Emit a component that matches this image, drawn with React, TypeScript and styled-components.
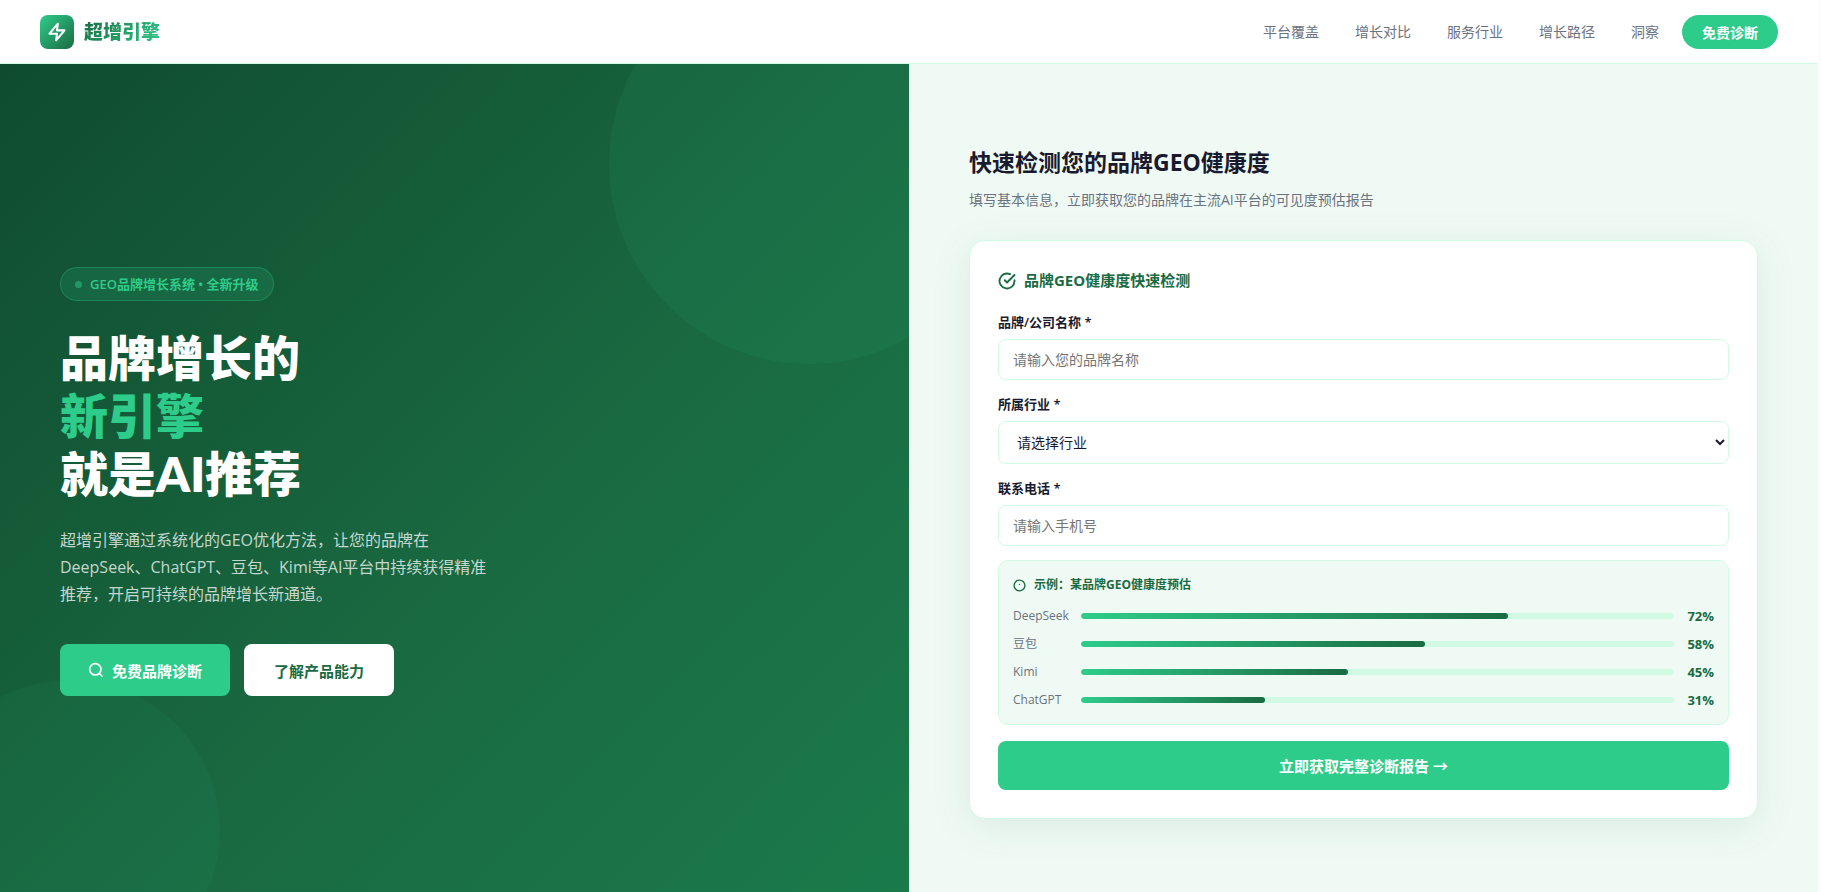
import React from "react";
import styled, { createGlobalStyle } from "styled-components";

const GlobalStyle = createGlobalStyle`
  *, *::before, *::after { box-sizing: border-box; margin: 0; padding: 0; }
  body {
    background: #fcfcfc;
    color: #1a1a2e;
    font-family: "Open Sans", "Noto Sans CJK SC", sans-serif;
    font-size: 14px;
    line-height: 22px;
  }
  button, input, select { font-family: inherit; }
`;

const Page = styled.div`
  display: flex;
  flex-direction: column;
  min-height: 100vh;
  padding-right: 3px;
`;

const NavBar = styled.header`
  display: flex;
  align-items: center;
  justify-content: space-between;
  height: 64px;
  padding: 0 40px;
  background: #fff;
  border-bottom: 1px solid #d1fae5;
`;

const Brand = styled.a`
  display: flex;
  align-items: center;
  gap: 10px;
  text-decoration: none;
`;

const BrandMark = styled.span`
  display: flex;
  align-items: center;
  justify-content: center;
  width: 34px;
  height: 34px;
  border-radius: 8px;
  background: linear-gradient(135deg, #2ecc8a, #1a6b42);
  color: #fff;
`;

const BrandName = styled.span`
  font-size: 19px;
  font-weight: 800;
  line-height: 28px;
  color: transparent;
  background: linear-gradient(135deg, #1a6b42, #2ecc8a);
  background-clip: text;
  -webkit-background-clip: text;
`;

const NavLinks = styled.nav`
  display: flex;
  align-items: center;
  gap: 36px;
`;

const NavLink = styled.a`
  color: #6b7280;
  text-decoration: none;
`;

const NavActions = styled.div`
  display: flex;
  align-items: center;
  gap: 23px;
`;

const NavButton = styled.button`
  height: 34px;
  padding: 0 20px;
  border: 0;
  border-radius: 20px;
  background: #2ecc8a;
  color: #fff;
  font-size: 14px;
  font-weight: 700;
  cursor: pointer;
`;

const Hero = styled.main`
  display: grid;
  grid-template-columns: 1fr 1fr;
  flex: 1;
`;

const Pitch = styled.section`
  position: relative;
  overflow: hidden;
  display: flex;
  flex-direction: column;
  justify-content: center;
  align-items: flex-start;
  padding: 48px 60px 41px;
  background: linear-gradient(135deg, #0f4c2f 0%, #1a6b42 60%, #1a7a4a 100%);
`;

const Circle = styled.span<{ $size: number; $alpha: number; $place: "top" | "bottom" }>`
  position: absolute;
  ${(p) => (p.$place === "top" ? "top: -100px; right: -100px;" : "bottom: -88px; left: -80px;")}
  width: ${(p) => p.$size}px;
  height: ${(p) => p.$size}px;
  border-radius: 50%;
  background: rgba(46, 204, 138, ${(p) => p.$alpha});
`;

const Badge = styled.p`
  display: flex;
  align-items: center;
  gap: 8px;
  height: 34px;
  padding: 0 14px;
  margin-bottom: 28px;
  border: 1px solid rgba(46, 204, 138, 0.3);
  border-radius: 20px;
  background: rgba(46, 204, 138, 0.15);
  color: #2ecc8a;
  font-size: 13px;
  font-weight: 600;
`;

const Dot = styled.span`
  width: 7px;
  height: 7px;
  border-radius: 50%;
  background: rgba(46, 204, 138, 0.5);
`;

const Headline = styled.h1`
  margin-bottom: 24px;
  color: #fff;
  font-family: Lato, "Noto Sans CJK SC", sans-serif;
  font-size: 48px;
  font-weight: 800;
  line-height: 58px;
`;

const Accent = styled.span`
  color: #2ecc8a;
`;

const Lead = styled.p`
  max-width: 440px;
  margin-bottom: 36px;
  color: rgba(255, 255, 255, 0.75);
  font-size: 16px;
  line-height: 27px;
`;

const Actions = styled.div`
  display: flex;
  gap: 14px;
`;

const ActionButton = styled.button<{ $primary?: boolean }>`
  display: flex;
  align-items: center;
  gap: 8px;
  height: 52px;
  padding: 0 ${(p) => (p.$primary ? 28 : 30)}px;
  border: 0;
  border-radius: 8px;
  background: ${(p) => (p.$primary ? "#2ecc8a" : "#fff")};
  color: ${(p) => (p.$primary ? "#fff" : "#1a6b42")};
  font-size: 15px;
  font-weight: 700;
  cursor: pointer;
`;

const CheckPanel = styled.section`
  display: flex;
  flex-direction: column;
  justify-content: center;
  padding: 48px 60px 40px;
  background: #f0faf5;
`;

const PanelTitle = styled.h2`
  margin-bottom: 9px;
  font-size: 23px;
  font-weight: 700;
  line-height: 34px;
`;

const PanelText = styled.p`
  margin-bottom: 28px;
  color: #6b7280;
  line-height: 24px;
`;

const Card = styled.form`
  display: flex;
  flex-direction: column;
  padding: 28px;
  border: 1px solid #d1fae5;
  border-radius: 16px;
  background: #fff;
  box-shadow: 0 8px 40px rgba(26, 107, 66, 0.1);
`;

const CardTitle = styled.h3`
  display: flex;
  align-items: center;
  gap: 8px;
  margin-bottom: 20px;
  color: #1a6b42;
  font-size: 15px;
  font-weight: 700;
  line-height: 23px;
`;

const Field = styled.div`
  display: flex;
  flex-direction: column;
  gap: 6px;
  margin-bottom: 14px;
`;

const FieldLabel = styled.label`
  font-size: 13px;
  font-weight: 600;
  line-height: 21px;
`;

const TextInput = styled.input`
  width: 100%;
  height: 41px;
  padding: 0 14px;
  border: 1px solid #d1fae5;
  border-radius: 8px;
  background: #fff;
  color: #1a1a2e;
  font-size: 14px;
  &::placeholder { color: #757575; }
`;

const SelectInput = styled.select`
  width: 100%;
  height: 43px;
  padding: 0 14px;
  border: 1px solid #d1fae5;
  border-radius: 8px;
  background: #fff;
  color: #1a1a2e;
  font-size: 14px;
`;

const Sample = styled.div`
  padding: 14px;
  margin-bottom: 16px;
  border: 1px solid #d1fae5;
  border-radius: 10px;
  background: #f0faf5;
`;

const SampleTitle = styled.h4`
  display: flex;
  align-items: center;
  gap: 8px;
  margin-bottom: 11px;
  color: #1a6b42;
  font-size: 12px;
  font-weight: 700;
  line-height: 20px;
`;

const ScoreList = styled.div`
  display: flex;
  flex-direction: column;
  gap: 8px;
`;

const ScoreRow = styled.div`
  display: flex;
  align-items: center;
  height: 20px;
  font-size: 12px;
  line-height: 20px;
`;

const ScoreName = styled.span`
  width: 68px;
  color: #6b7280;
`;

const Track = styled.div`
  flex: 1;
  height: 6px;
  border-radius: 3px;
  background: #d1fae5;
  overflow: hidden;
`;

const Fill = styled.div`
  height: 100%;
  border-radius: 3px;
  background: linear-gradient(90deg, #2ecc8a, #1a6b42);
`;

const ScoreValue = styled.span`
  width: 40px;
  color: #1a6b42;
  font-size: 13px;
  font-weight: 700;
  text-align: right;
`;

const Submit = styled.button`
  height: 49px;
  border: 0;
  border-radius: 8px;
  background: #2ecc8a;
  color: #fff;
  font-size: 15px;
  font-weight: 700;
  cursor: pointer;
`;

const Icon = ({ size, children }: { size: number; children: React.ReactNode }) => (
  <svg
    width={size}
    height={size}
    viewBox="0 0 24 24"
    fill="none"
    stroke="currentColor"
    strokeWidth="2.5"
    strokeLinecap="round"
    strokeLinejoin="round"
    aria-hidden="true"
  >
    {children}
  </svg>
);

const links = ["平台覆盖", "增长对比", "服务行业", "增长路径", "洞察"];

const scores = [
  { name: "DeepSeek", value: 72 },
  { name: "豆包", value: 58 },
  { name: "Kimi", value: 45 },
  { name: "ChatGPT", value: 31 },
];

export default function App() {
  return (
    <Page>
      <GlobalStyle />
      <NavBar>
        <Brand href="#">
          <BrandMark>
            <Icon size={20}>
              <path d="M13 2 3 14h9l-1 8 10-12h-9l1-8z" />
            </Icon>
          </BrandMark>
          <BrandName>超增引擎</BrandName>
        </Brand>
        <NavActions>
          <NavLinks>
            {links.map((l) => (
              <NavLink href="#" key={l}>{l}</NavLink>
            ))}
          </NavLinks>
          <NavButton type="button">免费诊断</NavButton>
        </NavActions>
      </NavBar>
      <Hero>
        <Pitch>
          <Circle $size={400} $alpha={0.08} $place="top" />
          <Circle $size={300} $alpha={0.06} $place="bottom" />
          <Badge><Dot />GEO品牌增长系统 • 全新升级</Badge>
          <Headline>
            品牌增长的<br />
            <Accent>新引擎</Accent><br />
            就是AI推荐
          </Headline>
          <Lead>
            超增引擎通过系统化的GEO优化方法，让您的品牌在DeepSeek、ChatGPT、豆包、Kimi等AI平台中持续获得精准推荐，开启可持续的品牌增长新通道。
          </Lead>
          <Actions>
            <ActionButton type="button" $primary>
              <Icon size={16}>
                <circle cx="11" cy="11" r="8.5" />
                <path d="m21 21-4-4" />
              </Icon>
              免费品牌诊断
            </ActionButton>
            <ActionButton type="button">了解产品能力</ActionButton>
          </Actions>
        </Pitch>
        <CheckPanel>
          <PanelTitle>快速检测您的品牌GEO健康度</PanelTitle>
          <PanelText>填写基本信息，立即获取您的品牌在主流AI平台的可见度预估报告</PanelText>
          <Card onSubmit={(e) => e.preventDefault()}>
            <CardTitle>
              <Icon size={18}>
                <path d="M22 11.08V12a10 10 0 1 1-5.93-9.14" />
                <path d="M22 4 12 14.01l-3-3" />
              </Icon>
              品牌GEO健康度快速检测
            </CardTitle>
            <Field>
              <FieldLabel htmlFor="brand">品牌/公司名称 *</FieldLabel>
              <TextInput id="brand" type="text" placeholder="请输入您的品牌名称" />
            </Field>
            <Field>
              <FieldLabel htmlFor="industry">所属行业 *</FieldLabel>
              <SelectInput id="industry" defaultValue="">
                <option value="">请选择行业</option>
              </SelectInput>
            </Field>
            <Field>
              <FieldLabel htmlFor="phone">联系电话 *</FieldLabel>
              <TextInput id="phone" type="tel" placeholder="请输入手机号" />
            </Field>
            <Sample>
              <SampleTitle>
                <Icon size={13}>
                  <circle cx="12" cy="12" r="10" />
                  <path d="M12 10h.01" />
                </Icon>
                示例：某品牌GEO健康度预估
              </SampleTitle>
              <ScoreList>
                {scores.map((s) => (
                  <ScoreRow key={s.name}>
                    <ScoreName>{s.name}</ScoreName>
                    <Track><Fill style={{ width: `${s.value}%` }} /></Track>
                    <ScoreValue>{s.value}%</ScoreValue>
                  </ScoreRow>
                ))}
              </ScoreList>
            </Sample>
            <Submit type="submit">立即获取完整诊断报告 →</Submit>
          </Card>
        </CheckPanel>
      </Hero>
    </Page>
  );
}
